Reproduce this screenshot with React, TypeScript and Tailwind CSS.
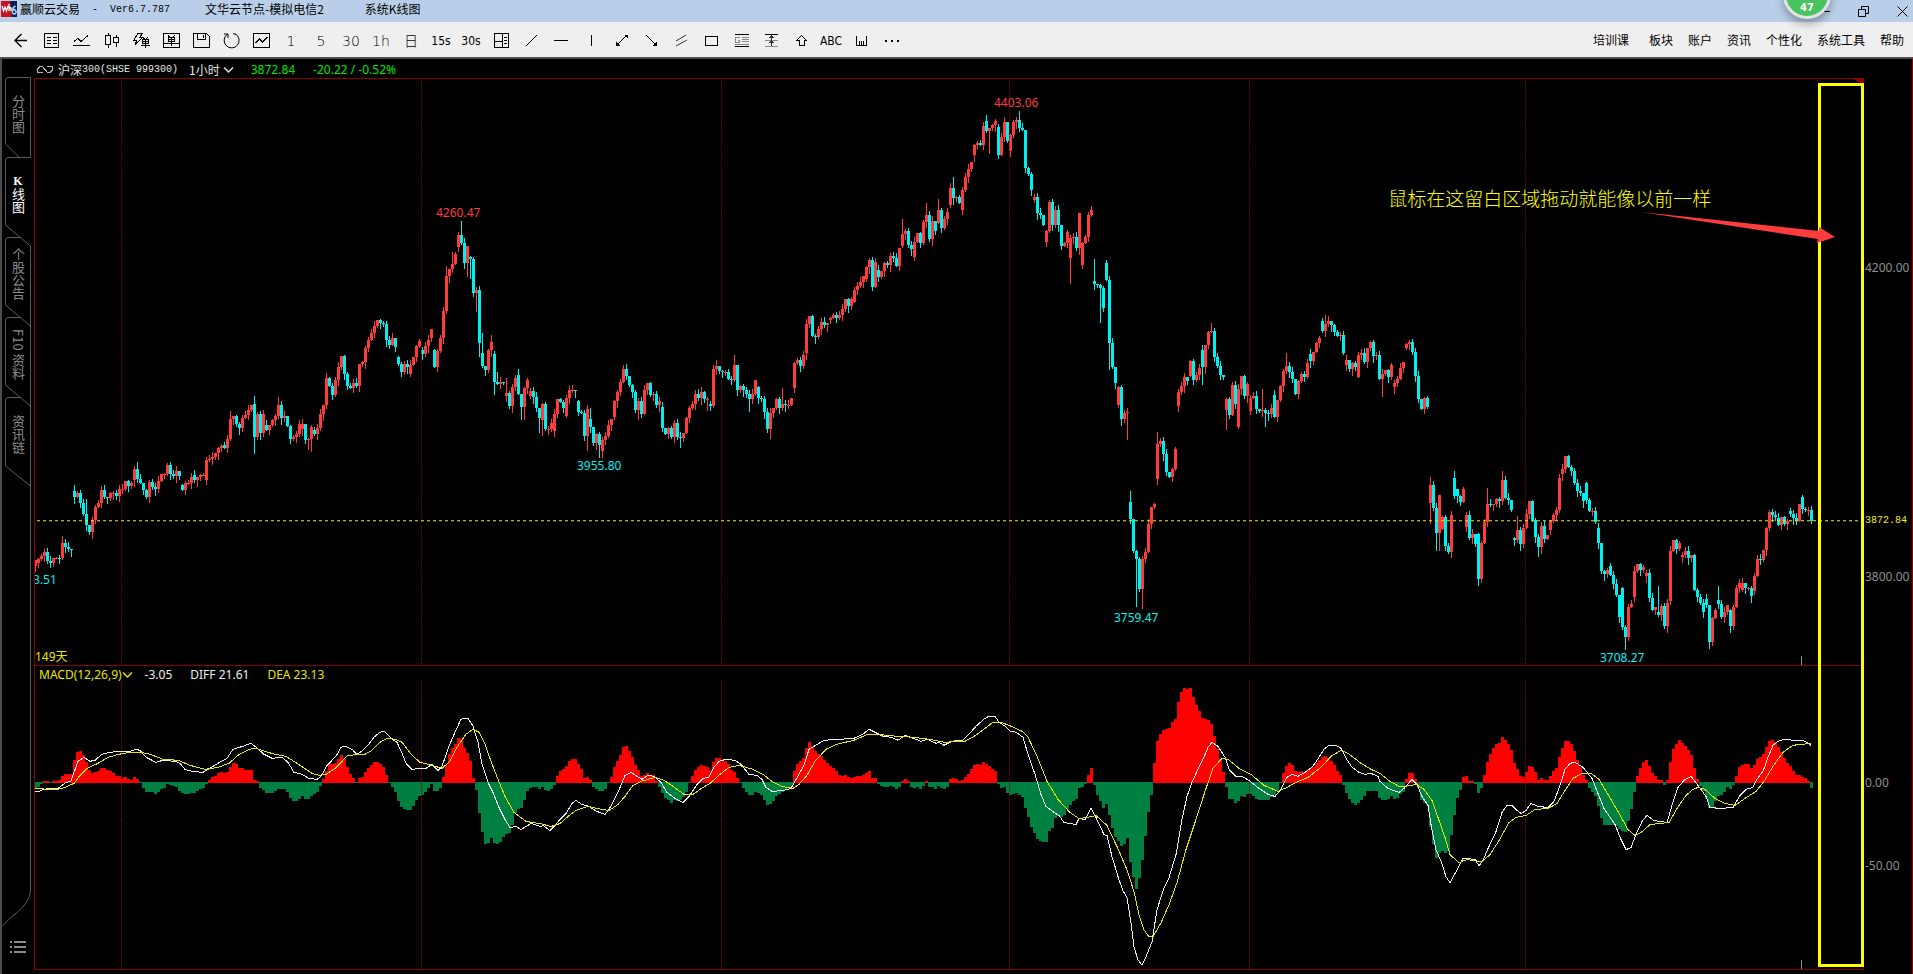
import React from 'react';
import { clsx } from 'clsx';

const SANS = "font-['Noto_Sans','Noto_Sans_CJK_SC',sans-serif]";
const MONO = "font-['Liberation_Mono',monospace]";

// One token per hourly candle: [open>]close[^high][_low]. Without an open the candle starts at the previous close.
const CANDLES = `
567>561_572 564>560 557 553 562 564_568 559 559 560^556 559>544^537 548 550 551
492>498^486_504 494 504 515 526^500 533 521^518 508 504 491 498 499 494 494 497 490_502 490 482 487 484 481>470 480^463 484 491 498 483 488 490 482 475 475 466 475 477 472 477
486>491 484 484 478 476>481 478 476 476 481>461 460 458 454 449 447 446>449 440 420^412 417 425 429 419 416 411 406 405>438^397_454 415 434 415
426>431 426 421 417 406^398 419 417 427 440 438 435 425 430>425 441 440_450 428_452 431>435 429 415 406 379^373 387 396 381 367 356 374 387 389 384 387 364 362 348 340 333 326 320 323 324
340 345 338 347 357>364 372 364 367 374>365 357 346 341 350>354 346 340 338>329 350>367 351 338 311 276^266 269 264^252 254 247>235 243^221 263 246_276 257>259_278 293 290_311 343_356
353>366^333 370 350 342^335 354>383_395 385^372 383 384 397>394^379 407 388 379 375>395^369 408_420 389_420 381 397>392 398 409 419_433 421>405_436 430 430 424 432>415_437 400 403 409 417>399 391 391 392
402>413 414 437 410_451 420>428^409 444 435 446_458 452>441_458 437 426 420 418>402 393 383 369 376 386 393 411 402_420 415 391 384 396 395 406 402
408>429 435 429 438 424 438 439_448 434 419 409 405 395 399 393^388 400 400_411 405>407 369 366^360 371 372 372 380 381 365^355 391 387 391 395 400_412 395 381
388>399 400 413 430 414_439 409 400 409 405^389 406 406 399 389>363 360 366 355 353>324 316 336 337_343 329 322 325 323 320>318 315 318 315 309 299 306 299
302>290 286 282 276 279>267 260 287 262 270>277 271 263 265 256 258 266 248 246>234^219 231 245 249 257>242 233 243 222 215^203 239 221 231 223>210^199 228 219 212
205>188 198^177 197 203 210>190 177 169 162 155>145 143 145 126 121>131^115 128_153 125 121 127>155 137 122 141 151>135 122 120 128^111 130 168 174 190
200>197 213 215 225 242>231 202 225 210 225 246 243 232 258>238_283 237 248 213 265>243 237 215 210 281>284^259 285 288_322 308
263>280 343_369 367 384 406>388 420 414 413_440
503>520^492 552 560_607 590 560_609 553 525 508 505 480>445^433 442 455 473 478 470 450
407>393 387 378 382 376>361 381 375 368 350>367_385 345 332 331^323 357 366 375 378 411>400_430 416 386 405 428>390 376 397 385 412>399 397 410 412 411^390 414_427 415 409
396>418 401 387 371 366^353 372 380 395 382 374 377 363 354>361 352 343 338 321>331 324^315 321 325 332 336 335 353
365>360 369 363 367 378>355 353 362 348 342 356 355 380 374_397 370 378 365 388>384 380 368 362 348>344 342 352 376 400 410 399 408
504>486^478_524 509 534_551 534>496_551 530>518 547 553 516 479>497^472 490>497 503 490 528>516 539 535 545 535>580 544 523 505^489 506 505 500 502 481^472 499 501 511
539>541 531^517 545 529 515 502 521 538 548_557 527 540 536 531>522 516 511 479 475>470 457 468 472 484 492 494 502 484>501 512 512 523
529>544 572 575 571 567>576 585 596 618 589>628 638_650 608 605 598>572 565 571 568 577>574 599 611 608 613>616^587 607 627 604 602>552 541 550 544
558>556 552 559 556 591 598 604 613 600>606 643 619 611 601>605^587 618 613 606 611>627 608 589 584 591>584 589 589 597 592>577 560 561 551 529 513 516 518 519>526 518 525 522
512>515 519 522 505 498>510^496 511 511 522`;

// MACD histogram, one bar per candle, in chart units above or below the zero line.
const HISTOGRAM = `
-5 -4 -1 1 1 0 1 1 2 6 8 8 8 22 30 31 27 20 12 9 10 11 14 14 12 11 9 6 6 4 5 3 2 5 3 0 -5 -9 -9 -9 -11 -9 -6 -5 -1 -2 -3 -4 -8 -10 -11 -11 -10 -10 -8 -6 -5 -1
2 5 6 9 10 9 10 15 19 18 14 14 12 12 12 2 1 -5 -7 -10 -10 -10 -8 -6 -6 -6 -9 -15 -18 -18 -16 -13 -16 -16 -13 -11 -9 -3 3 11 19 18 19 23 27 23 15 8 4 0 4 5 10 14 17 20 20 18 15 7 0
-4 -9 -18 -24 -26 -27 -27 -23 -17 -13 -12 -9 -5 -1 -8 -8 -5 5 17 28 34 38 44 43 34 29 21 4 -7 -30 -48 -60 -59 -54 -59 -60 -58 -53 -50 -49 -41 -30 -26 -25 -17 -8 -5 -4 -4 -6 -4 -7 -8 -6 -2
6 11 13 16 21 23 23 18 13 4 5 2 -4 -6 -8 -8 -6 0 5 15 21 27 35 36 31 25 17 12 6 7 9 7 7 1 -4 -10 -15 -17 -20 -17 -18 -17 -14 -9 0 6 12 15 17 16 15 12 20 24 24 22 21 18 12 10 4 0
-5 -9 -12 -12 -9 -10 -12 -17 -22 -21 -18 -13 -11 -9 -7 -5 -3 11 18 21 24 34 40 36 31 28 26 22 19 16 14 11 7 6 7 5 4 5 6 6 7 9 11 4 4 -1 -3 -4 -4 -3 -4 -6 -4 1 3 1 -4 -5 -4 -6 -3 1 -4 -4 -6 -3 -5 -6 -4
3 4 3 1 2 5 8 13 17 18 17 20 18 16 13 11 -1 -5 -4 -10 -12 -11 -10 -12 -14 -25 -34 -43 -49 -55 -57 -58 -58 -47 -44 -35 -33 -34 -32 -26 -22 -18 -16 -5 -4 -1 7 14 -2 -12 -18 -25 -21 -32 -44 -53 -57 -62 -60 -54 -78 -93 -105 -94 -76 -52 -29 -12
19 41 48 52 53 54 60 63 80 90 94 93 94 85 77 71 64 63 62 58 46 33 23 10 -4 -16 -16 -20 -18 -13 -14 -11 -11 -13 -16 -17 -17 -17 -17 -14 -12 -8 0 9 16 19 17 11 10 11 10 12 14 15 19 22 25 26 24 21 17 11 7
-2 -10 -16 -20 -22 -20 -17 -13 -8 -8 -8 -8 -15 -17 -17 -16 -13 -16 -15 -11 -9 3 9 9 3 -5 -17 -20 -22 -43 -60 -74 -69 -67 -69 -67 -51 -32 -15 -7 5 6 1 1 -1 -10 -5 7 20 28 34 38 39 45 42 38 32 19 13 6 5
10 16 15 10 2 4 2 2 6 11 14 25 34 41 41 38 31 22 15 7 2 -5 -9 -13 -23 -35 -41 -41 -41 -41 -42 -45 -47 -48 -37 -26 -9 6 14 20 22 16 9 6 2 2 -2 2 20 33 38 42 39 36 32 27 14 3 -3 -8 -16 -25 -25 -18 -13 -12 -9 -4 -6 -2
6 15 17 18 18 14 17 23 25 28 35 41 42 40 35 30 24 19 16 11 7 7 5 4 1 -5`;

const DIFF_LINE = `35,792 39,792 43,790 51,789 58,789 62,786 66,783 71,782 74,773 78,762 84,758 90,762 95,761 102,755 110,753 122,752 130,752 137,750 141,752 146,758 156,763 163,761 175,762 180,764 185,770 192,772 203,773 208,770 218,764 227,759 233,750 243,747 251,744 256,748 264,755 272,759 282,758 288,763 294,773 302,775 309,779 317,780 322,776 327,766 336,757 341,748 345,747 352,750 357,755 363,751 368,746 374,738 380,733 384,732 391,739 397,743
402,754 406,764 412,770 420,769 426,769 432,765 438,771 442,767 449,747 455,733 461,720 468,719 473,727 478,743 482,765 488,783 493,793 499,808 505,820 510,828 516,827 521,830 526,827 531,824 541,827 543,826 550,831 554,827 560,820 566,814 572,804 576,801 582,805 589,807 597,812 605,815 609,810 615,799 621,786 625,776 631,773 637,777 642,780 648,776 654,777 661,783 667,793 675,799 683,803 689,797 697,785 703,779 709,778 714,768 719,762 726,760 735,761 741,765 749,775
757,776 762,780 766,788 772,792 784,791 791,789 795,782 800,773 804,766 809,750 814,747 824,741 841,740 854,739 863,735 869,730 875,733 883,737 891,738 898,741 905,736 913,739 921,742 927,740 936,744 939,743 944,746 950,743 957,741 963,741 969,735 976,727 984,720 989,717 995,717 999,723 1005,727 1010,732 1016,733 1023,738 1028,755 1035,775 1041,795 1046,807 1054,813 1059,816 1064,823 1076,825 1079,819 1085,820 1091,809 1096,818 1104,835 1107,836 1112,857 1119,880 1123,891 1127,898 1131,923 1134,947 1138,960 1142,965 1146,957 1152,942 1157,910 1164,888 1169,878 1176,855 1182,820 1187,797 1192,783 1197,772 1203,760 1208,748 1212,743 1218,747 1225,758 1229,770 1236,777 1242,777 1249,781 1259,789 1268,795 1275,797 1281,790 1287,778 1292,775 1298,777 1305,773 1312,768 1317,761 1324,750 1329,746 1336,746 1341,749 1346,759 1352,768 1359,773 1365,775 1371,774 1378,777
1380,782 1388,789 1399,793 1404,789 1412,780 1417,785 1422,797 1428,806 1431,825 1436,850 1442,864 1446,877 1450,883 1456,872 1463,859 1468,859 1475,860 1479,866 1483,861 1488,849 1496,832 1502,813 1507,806 1512,806 1516,810 1521,814 1526,811 1531,804 1538,807 1548,808 1554,802 1559,789 1565,770 1570,764 1575,763 1583,768 1592,779 1598,794 1604,809 1615,825 1621,840 1626,850 1631,848 1636,835 1642,822 1647,816 1654,821 1667,823 1672,806 1678,788 1685,780 1691,777 1698,786 1706,797 1710,808 1720,809 1733,808 1740,796 1746,790 1753,788 1757,780 1763,772 1768,758 1773,746 1778,742 1784,740 1793,741 1803,741 1811,746`;

const DEA_LINE = `35,789 50,790 57,790 65,788 74,784 80,776 87,769 98,764 108,758 119,755 130,753 140,753 150,755 163,760 178,761 190,766 205,770 218,768 229,764 238,756 249,750 256,749 268,753 275,755 286,757 300,766 312,774 319,776 326,775 335,769 348,756 365,755 372,751 380,743 387,739 395,740
402,743 411,755 420,763 432,766 442,769 450,762 457,748 466,735 473,730 479,733 485,745 491,762 498,780 505,797 514,813 526,822 540,824 551,827 560,824 568,817 576,811 588,807 597,809 609,811 618,805 625,797 633,786 641,782 655,778 664,781 673,787 684,795 693,795 700,790 710,784 720,775 729,768 739,766
753,770 763,775 772,782 782,787 793,789 799,785 807,776 815,762 826,750 837,745 854,741 868,735 877,735 896,737 913,738 929,740 944,743 965,742 976,736 984,730 993,723 1001,723 1011,727 1022,732 1028,738 1037,757 1047,782 1058,800 1070,813 1079,819 1087,818 1096,816 1107,826 1117,847 1127,870 1134,892 1139,915 1144,930 1149,937 1153,937 1161,923 1169,905 1177,883 1186,850 1195,823 1205,792 1213,769 1222,759 1228,760 1239,769 1251,775 1264,786 1278,792 1287,788 1296,783 1308,778 1321,768 1331,757 1341,751 1348,754 1361,764 1371,770
1380,774 1390,782 1399,787 1405,787 1416,785 1424,790 1432,801 1438,818 1445,838 1450,855 1459,863 1467,860 1482,862 1490,855 1499,841 1509,823 1516,818 1526,816 1535,810 1548,809 1557,804 1565,791 1573,779 1582,774 1591,774 1599,780 1608,795 1618,812 1628,830 1635,836 1641,833 1650,825 1669,823 1677,809 1686,796 1693,790 1698,788 1705,790 1715,799 1725,804 1735,806 1745,799 1756,792 1764,782 1773,767 1783,753 1793,746 1803,745 1811,744`;

const X0 = 35;
const STEP = 3;
const ZERO = 783;
const MONTH_LINES = [121, 421, 721, 1009, 1249, 1525];

interface Candle {
  x: number;
  open: number;
  close: number;
  high: number;
  low: number;
}

function parseCandles(source: string): Candle[] {
  let last = 0;
  return source.trim().split(/\s+/).map((token, i) => {
    const m = /^(?:(\d+)>)?(\d+)(?:\^(\d+))?(?:_(\d+))?$/.exec(token)!;
    const close = Number(m[2]);
    const open = m[1] ? Number(m[1]) : last;
    last = close;
    const high = m[3] ? Number(m[3]) : Math.min(open, close) - ((i * 37) % 6);
    const low = m[4] ? Number(m[4]) : Math.max(open, close) + ((i * 53) % 7);
    return { x: X0 + i * STEP, open, close, high, low };
  });
}

const candles = parseCandles(CANDLES);
const bars = HISTOGRAM.trim().split(/\s+/).map(Number);

function candlePath(up: boolean) {
  return candles
    .filter((c) => (c.close <= c.open) === up)
    .map((c) => {
      const top = Math.min(c.open, c.close);
      const height = Math.max(Math.abs(c.open - c.close), 1);
      return `M${c.x - 1} ${top}h3v${height}h-3zM${c.x} ${c.high}h1V${c.low + 1}h-1z`;
    })
    .join('');
}

function barPath(up: boolean) {
  return bars
    .map((v, i) => {
      if (v > 0 !== up) return '';
      const x = X0 + i * STEP - 1;
      return up ? `M${x} ${ZERO - v}h3V${ZERO + 1}h-3z` : `M${x} ${ZERO}h3v${1 - v}h-3z`;
    })
    .join('');
}

interface ToolItem {
  name: string;
  icon?: React.ReactNode;
  text?: string;
  small?: boolean;
}

const tools: ToolItem[] = [
  { name: '返回', icon: <path d="M18 12.500H6M12.500 6L6 12.500L12.500 19" strokeWidth="1.400" shapeRendering="auto" /> },
  { name: '报价', icon: <path d="M5.500 5.500h14v14h-14zM7.500 9.500h4M13.500 9.500h4M7.500 12.500h4M13.500 12.500h4M7.500 15.500h4M13.500 15.500h4" /> },
  { name: '分时', icon: <path d="M4 17.500h17M5 13.500l4-3 3 3 7-6" /> },
  { name: 'K线', icon: <path d="M6.500 7.500h5v9h-5zM9 5v2.500M9 16.500v3M14.500 9.500h5v5h-5zM17 7v2.500M17 14.500v4" /> },
  { name: '快速下单', icon: <path d="M9 5h5l-3 4h3l-8 8 2-5H5zM14 9l1.500 2M19 9l-1.500 2M13.500 11.500h6v4h-6zM13.500 13.500h6M12 17.500h9M16.500 11.500V20" /> },
  { name: '下单', icon: <path d="M4.500 5.500h16v14h-16zM9 7l1.500 2M16 7l-1.500 2M9.500 9.500h6v4h-6zM9.500 11.500h6M4.500 15.500h16M12.500 9.500V18" /> },
  { name: '保存', icon: <path d="M4.500 5.500h13l3 3v11h-16zM8.500 5.500v6h8v-6M14.500 7v3" /> },
  { name: '刷新', icon: <path d="M8 6.500a7.500 7.500 0 1 0 8.500-.5M5 6h4v4M17 6.500l-3-1" shapeRendering="auto" /> },
  { name: '走势', icon: <path d="M4.500 5.500h16v14h-16zM6.500 15l4-4 3 3 5-5" /> },
  { name: '1分钟', text: '1' },
  { name: '5分钟', text: '5' },
  { name: '30分钟', text: '30' },
  { name: '1小时', text: '1h' },
  { name: '日线', text: '日' },
  { name: '15秒', text: '15s', small: true },
  { name: '30秒', text: '30s', small: true },
  { name: '组合', icon: <path d="M5.500 5.500h14v14h-14zM13.500 5.500v14M5.500 13.500h8M15 9.500h3M15 12.500h3M15 15.500h3" /> },
  { name: '斜线', icon: <path d="M7 18L18 7" /> },
  { name: '水平线', icon: <path d="M5 12.500h14" /> },
  { name: '垂直线', icon: <path d="M12.500 7v11" /> },
  { name: '双箭头', icon: <><path d="M8 17L18 7" /><path d="M7 14v4h4zM15 7h4v4z" fill="currentColor" stroke="none" /></> },
  { name: '箭头', icon: <><path d="M7 7l10 10" /><path d="M18 13v5h-5z" fill="currentColor" stroke="none" /></> },
  { name: '平行线', icon: <path d="M7 13l10-6M7 18l11-6" stroke="#333" shapeRendering="auto" /> },
  { name: '矩形', icon: <path d="M6.500 8.500h12v9h-12z" /> },
  { name: '黄金分割', icon: <><path d="M6 6.500h14M6 18.500h14" /><path d="M13 9.500h7M13 11.500h7M13 13.500h7M6 16.500h14M11 9.500H6.500v5h4v-2H9" stroke="#888" /></> },
  { name: '区间', icon: <><path d="M6 6.500h13" /><path d="M6 12.500h13M6 18.500h13" stroke="#888" /><path d="M12.500 7v11M10.500 10l2-2 2 2M10.500 15l2-2 2 2" stroke="#333" /></> },
  { name: '向上', icon: <path d="M12.500 7.500l5 5h-2.500v5h-5v-5h-2.500z" /> },
  { name: '文字', text: 'ABC', small: true },
  { name: '标尺', icon: <path d="M7.500 8v9h10V8M10.500 13v4M12.500 13v4M14.500 13v4" /> },
  { name: '更多', icon: <path d="M6 13h2M12 13h2M18 13h2" strokeWidth="2" /> },
];

const menus = ['培训课', '板块', '账户', '资讯', '个性化', '系统工具', '帮助'];
const sideTabs = ['分时图', 'K线图', '个股公告', 'F10 资料', '资讯链'];

const priceLabels = [
  { text: '4403.06', x: 994, y: 103, up: true },
  { text: '4260.47', x: 436, y: 213, up: true },
  { text: '3955.80', x: 577, y: 467, up: false },
  { text: '3.51', x: 33, y: 581, up: false },
  { text: '3759.47', x: 1114, y: 619, up: false },
  { text: '3708.27', x: 1600, y: 659, up: false },
];

const axisLabels = [
  { text: '4200.00', y: 268 },
  { text: '3872.84', y: 521, current: true },
  { text: '3800.00', y: 577 },
  { text: '0.00', y: 783 },
  { text: '-50.00', y: 866 },
];

function Chevron() {
  return (
    <svg width="11" height="8" viewBox="0 0 11 8" fill="none" stroke="currentColor" strokeWidth="1.500">
      <path d="M1 1.500l4.500 4.500L10 1.500" />
    </svg>
  );
}

function Logo() {
  return (
    <svg width="16" height="16" viewBox="0 0 16 16">
      <rect width="16" height="16" fill="#c8141e" />
      <path d="M9 0h7v16h-5z" fill="#101c50" />
      <path d="M1 5l1.500 5 1.500-4 1.500 4L7 5M8 3v7M8 7.500q2-2 2 0V10" fill="none" stroke="#fff" strokeWidth="1.300" />
      <path d="M14.500 5q-4 2-3 6.500a1.800 2.200 0 1 0 .3-2" fill="none" stroke="#9fd0ff" strokeWidth="1.600" />
    </svg>
  );
}

function TitleBar() {
  return (
    <header className="relative flex h-[22px] shrink-0 items-center bg-[#b9cfe9] text-[12px] leading-[16px] text-black">
      <div className="ml-px mb-[4px] flex flex-1 items-center">
        <Logo />
        <span className="ml-[3px]">赢顺云交易</span>
        <span className={clsx('whitespace-pre pt-[2px] text-[10px]', MONO)}>{'  -  Ver6.7.787'}</span>
        <span className="ml-[35px]">文华云节点-模拟电信2</span>
        <span className="ml-[41px]">系统K线图</span>
      </div>
      <div className="flex gap-[17px]">
        <button type="button" aria-label="最小化" className="flex h-[22px] w-[22px] items-center justify-center">
          <svg width="11" height="11" viewBox="0 0 11 11" stroke="#000"><path d="M0 5.500h11" /></svg>
        </button>
        <button type="button" aria-label="还原" className="flex h-[22px] w-[22px] items-center justify-center">
          <svg width="11" height="11" viewBox="0 0 11 11" fill="none" stroke="#000"><path d="M.5 3.500h7v7h-7zM3.500 3.500v-3h7v7h-3" /></svg>
        </button>
        <button type="button" aria-label="关闭" className="flex h-[22px] w-[22px] items-center justify-center">
          <svg width="11" height="11" viewBox="0 0 11 11" stroke="#000"><path d="M.5.5l10 10M10.500.5l-10 10" /></svg>
        </button>
      </div>
      {/* floating monitor ball, partly above the top edge */}
      <div className="absolute right-[82px] top-[-29px] z-20 flex h-[48px] w-[48px] items-end justify-center rounded-full border-3 border-[#dfe3e6] bg-[#48c35f] shadow-[0_5px_9px_rgba(0,0,0,0.3)]">
        <span className="pb-[2px] text-[10px] leading-[12px] font-bold text-white font-['DejaVu_Sans',sans-serif]">47</span>
      </div>
    </header>
  );
}

function Toolbar() {
  return (
    <nav className="flex h-[35px] shrink-0 items-center bg-[#efefef] pl-[6px] text-black">
      {tools.map((tool) => (
        <button
          key={tool.name}
          type="button"
          aria-label={tool.text ? undefined : tool.name}
          className={clsx(
            'flex h-[30px] w-[30px] shrink-0 items-center justify-center',
            tool.small
              ? "text-[12px] font-['DejaVu_Sans_Condensed','Liberation_Sans',sans-serif]"
              : "text-[14px] font-extralight font-['DejaVu_Sans','Noto_Sans_CJK_SC',sans-serif]"
          )}
        >
          {tool.text ? (
            <span className="pt-[3px] leading-[16px]">{tool.text}</span>
          ) : (
            <svg width="24" height="24" viewBox="0 0 24 24" fill="none" stroke="currentColor" shapeRendering="crispEdges">
              {tool.icon}
            </svg>
          )}
        </button>
      ))}
      <div className="ml-auto flex gap-[15px] pr-[9px] text-[12px] leading-[16px]">
        {menus.map((menu, i) => (
          <button key={menu} type="button" className={clsx('whitespace-nowrap', i === 0 && 'mr-[5px]')}>
            {menu}
          </button>
        ))}
      </div>
    </nav>
  );
}

function SideBar() {
  return (
    <aside className="relative flex w-[32px] shrink-0 flex-col pt-[18px]">
      <svg className="absolute left-0 top-0" width="32" height="915" viewBox="2 59 32 915" fill="none" stroke="#5c5c5c">
        <path d="M7.500 77.500h23v80M7.500 77.500l-2 2V144l14 13.500" />
        <path d="M30.500 157.500h-23l-2 2V225l25 21" />
        <path d="M20 237.500H7.500l-2 2V305l25 21" />
        <path d="M20 317.500H7.500l-2 2V385l25 21" />
        <path d="M20 397.500H7.500l-2 2V466l25 20" />
        <path d="M30.500 246V891q-1 11-13 21-8 6-15 14" />
      </svg>
      {sideTabs.map((tab, i) => (
        <button
          key={tab}
          type="button"
          className={clsx(
            'relative flex h-[80px] w-full items-center justify-center pb-[6px] text-[13px] leading-[16px] [writing-mode:vertical-rl]',
            i === 1 ? 'text-white' : 'text-[#8a8a8a]'
          )}
        >
          {i === 1 ? (
            <span>
              <b className="text-[12px] [text-orientation:upright] font-['Liberation_Serif',serif]">K</b>线图
            </span>
          ) : (
            tab
          )}
        </button>
      ))}
      <button type="button" aria-label="菜单" className="relative mt-auto mb-[20px] flex justify-center">
        <svg width="16" height="14" viewBox="0 0 16 14" stroke="#8a8a8a" strokeWidth="2">
          <path d="M0 2h2M4 2h12M0 7h2M4 7h12M0 12h2M4 12h12" />
        </svg>
      </button>
    </aside>
  );
}

function QuoteHeader() {
  return (
    <div className={clsx('flex h-[19px] shrink-0 items-center pl-[3px] pt-[2px] text-[12px] leading-[16px] text-[#e6e6e6]', SANS)}>
      <svg width="16" height="9" viewBox="0 0 16 9" fill="none" stroke="#b0b0b0" shapeRendering="crispEdges">
        <path d="M6 1.500H3L.5 4v3.500H6M10 1.500h5.500V5L13 7.500h-3M5 1l6 7" />
      </svg>
      <span className="ml-[5px] font-['Noto_Sans_CJK_SC',sans-serif]">沪深</span>
      <span className={clsx('text-[10px]', MONO)}>300(SHSE 999300)</span>
      <button type="button" className="ml-[11px] flex items-center gap-[3px] font-['Noto_Sans_CJK_SC',sans-serif]">
        1小时 <Chevron />
      </button>
      <span className="ml-[17px] text-[#00e600]">3872.84</span>
      <span className="ml-[18px] text-[#00e600]">-20.22 / -0.52%</span>
    </div>
  );
}

function MonthLines({ top, bottom }: { top: number; bottom: number }) {
  return (
    <>
      {MONTH_LINES.map((x) => (
        <path key={x} d={`M${x}.5 ${top}V${bottom}`} stroke="#8c0000" strokeDasharray="1 1" />
      ))}
    </>
  );
}

function PricePanel() {
  return (
    <section className={clsx('relative min-h-0 flex-[588] overflow-hidden border-x border-t border-[#8c0000] text-[12px] leading-[16px]', SANS)}>
      <svg className="absolute inset-0 h-full w-full" viewBox="35 79 1828 587" preserveAspectRatio="none" fill="none" shapeRendering="crispEdges">
        <path d={candlePath(true)} fill="#ff3c3c" />
        <path d={candlePath(false)} fill="#00f0f0" />
        <MonthLines top={80} bottom={666} />
        <path d="M37 521.500H1859" stroke="#f0f000" strokeDasharray="3 3" />
        <path d="M1801.500 657V666" stroke="#909090" />
        <path d="M1853 79h10v5z" fill="#8c0000" />
      </svg>
      {priceLabels.map((label) => (
        <span
          key={label.text}
          className={clsx('absolute -translate-y-1/2 whitespace-nowrap', label.up ? 'text-[#ff3c3c]' : 'text-[#00f0f0]')}
          style={{ left: `${((label.x - 35) / 1828) * 100}%`, top: `${((label.y - 79) / 587) * 100}%` }}
        >
          {label.text}
        </span>
      ))}
      <span className="absolute bottom-0 left-0 text-[#e6e600]">149天</span>
    </section>
  );
}

function MacdPanel() {
  return (
    <section className={clsx('relative min-h-0 flex-[304] border border-[#8c0000] text-[12px] leading-[16px]', SANS)}>
      <svg className="absolute inset-0 h-full w-full" viewBox="35 667 1828 302" preserveAspectRatio="none" fill="none" shapeRendering="crispEdges">
        <path d={barPath(false)} fill="#008040" />
        <path d={barPath(true)} fill="#ff0000" />
        <MonthLines top={682} bottom={969} />
        <polyline points={DIFF_LINE} stroke="#f0f0f0" />
        <polyline points={DEA_LINE} stroke="#e6e600" />
        <path d="M1801.500 960V969" stroke="#909090" />
      </svg>
      <div className="relative flex pl-[4px] pt-px text-[#e6e600]">
        <button type="button" className="flex items-center">
          MACD(12,26,9)
          <Chevron />
        </button>
        <span className="ml-[12px] text-[#f0f0f0]">-3.05</span>
        <span className="ml-[18px] text-[#f0f0f0]">DIFF 21.61</span>
        <span className="ml-[18px]">DEA 23.13</span>
      </div>
    </section>
  );
}

function Annotation() {
  return (
    <div className="pointer-events-none absolute inset-0">
      <div className="absolute bottom-[3px] right-0 top-[5px] w-[46px] border-3 border-[#ffff00]" />
      <p className="absolute left-[74%] top-[13.500%] -translate-y-1/2 whitespace-nowrap text-[19px] leading-[24px] font-light text-[#ffff00]">
        鼠标在这留白区域拖动就能像以前一样
      </p>
      <svg className="absolute inset-0 h-full w-full" viewBox="34 78 1830 892" preserveAspectRatio="none">
        <path d="M1641 212L1819 231V227L1835 237L1817 243L1818 239z" fill="#ff3c3c" />
      </svg>
    </div>
  );
}

function Axis() {
  return (
    <div className="relative w-[48px] shrink-0 text-[12px] leading-[16px]">
      {axisLabels.map((label) => (
        <span
          key={label.text}
          className={clsx(
            'absolute left-px -translate-y-1/2',
            label.current ? clsx('text-[10px] text-[#f0f000]', MONO) : clsx('text-[#909090]', SANS)
          )}
          style={{ top: `${((label.y - 78) / 892) * 100}%` }}
        >
          {label.text}
        </span>
      ))}
    </div>
  );
}

export default function App() {
  return (
    <div className="flex h-screen min-h-[640px] flex-col overflow-hidden bg-black font-['Noto_Sans_CJK_SC',sans-serif]">
      <TitleBar />
      <Toolbar />
      <main className="flex min-h-0 flex-1 border-l-2 border-t-2 border-[#4d4d4d]">
        <SideBar />
        <div className="flex min-w-0 flex-1 flex-col border-r border-r-[#8c0000] pb-[4px]">
          <QuoteHeader />
          <div className="flex min-h-0 flex-1">
            <div className="relative flex min-w-0 flex-1 flex-col">
              <PricePanel />
              <MacdPanel />
              <Annotation />
            </div>
            <Axis />
          </div>
        </div>
      </main>
    </div>
  );
}
